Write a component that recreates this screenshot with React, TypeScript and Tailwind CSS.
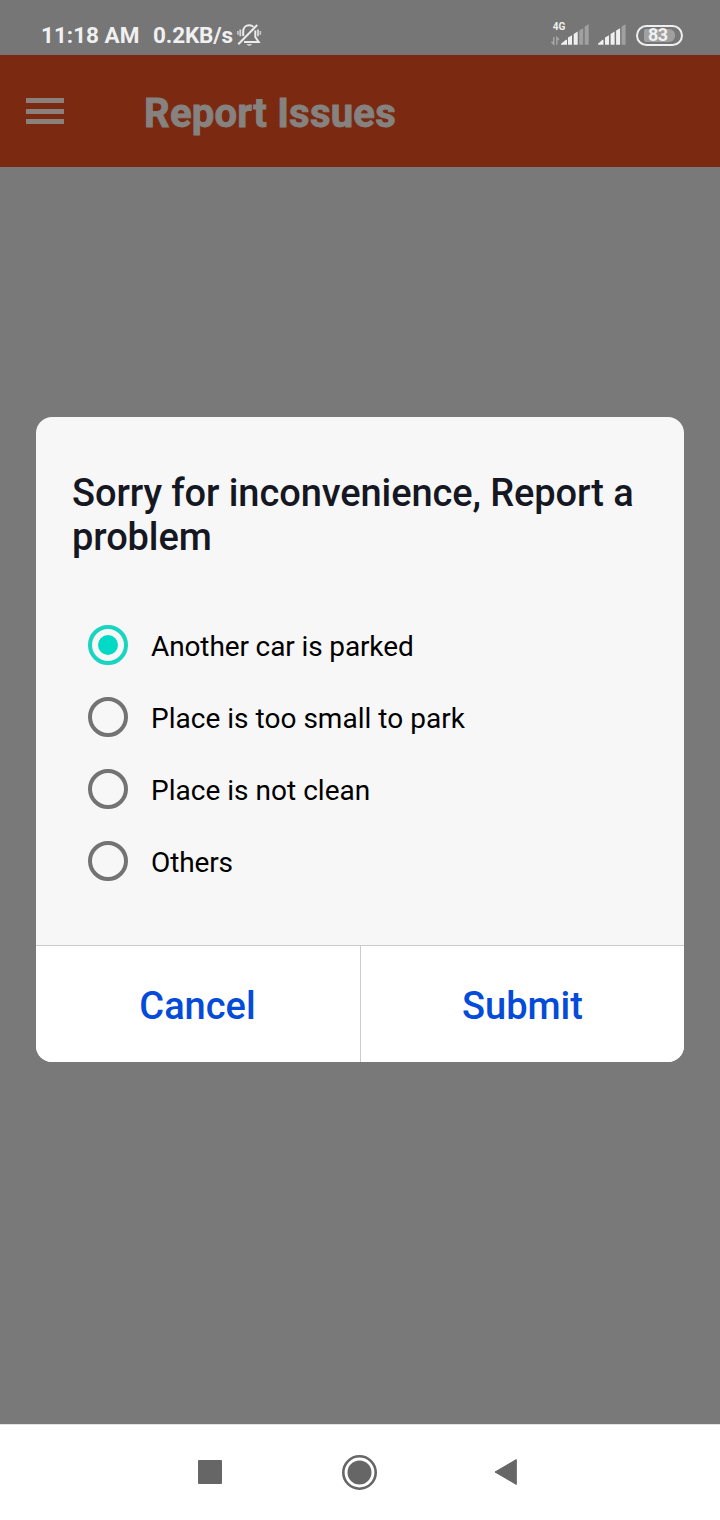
import React, { useState } from "react";

const options = ["Another car is parked", "Place is too small to park", "Place is not clean", "Others"];

function StatusBar() {
  return (
    <div className="flex h-[55px] items-center bg-[#767676] pt-[15px] pr-[37px] pl-[41px] text-[22.5px] font-bold text-[#f0f0f0]">
      <span className="w-[99px] pt-[2px] whitespace-nowrap">11:18 AM</span>
      <span className="ml-[13px] w-[80px] pt-[2px] tracking-[-0.15px] whitespace-nowrap">0.2KB/s</span>
      <svg className="ml-[3px] h-[26px] w-[26px]" viewBox="236 22 26 26" fill="none" stroke="#ececec" strokeWidth="2">
        <path d="M243.2 36v-4.5c0-3.8 2.6-6.3 6-6.3 1.7 0 3.2.6 4.2 1.7M255.3 30.5V37l3.4 5H244" />
        <path d="M238.3 44.2 257.2 25" />
        <path d="M246.5 44.3h5.6c-.8 1.9-4.8 1.9-5.6 0z" fill="#ececec" stroke="none" />
        <path d="M240.3 29.5v6.7M258 29.5v6.7" strokeWidth="1.9" opacity=".8" />
        <path d="M237.9 31v3.8M260.3 31v3.8" strokeWidth="1.6" opacity=".7" />
      </svg>
      <svg className="ml-auto h-[26px] w-[76px]" viewBox="550 22 76 26" fill="#efefef">
        <text x="552.8" y="30.2" fontSize="10" fontWeight="700" fontFamily="Roboto">4G</text>
        <path d="M553.7 37v7.2l-2.2-2.4M556.8 44.8v-7.2l2.2 2.4" fill="none" stroke="#a9a9a9" strokeWidth="1.4" />
        <path d="M561 44.7v-1l5-4h1v5zM568 37.5l4-2.3v9.5h-4zM573.7 34l4-2.5v13.2h-4z" />
        <path d="M579.2 30.5l4-2.3v16.5h-4zM584.7 26.6l4-2.3v20.4h-4z" fill="#a0a0a0" />
        <path d="M598 44.7v-1l4.5-4h1v5zM605 37.5l4-2.3v9.5h-4zM610.6 34l4-2.5v13.2h-4zM616.1 30.5l4-2.3v16.5h-4z" />
        <path d="M621.6 26.6l4-2.3v20.4h-4z" fill="#a0a0a0" />
      </svg>
      <span className="ml-[10px] flex h-[21px] w-[47px] items-center justify-center rounded-full border-2 border-[#efefef]">
        <span className="flex h-[13px] w-[31px] items-center rounded-[2px] rounded-r-[6px] bg-[#a0a0a0] pl-[4px] text-[18px] leading-none tracking-[-0.5px]">83</span>
      </span>
    </div>
  );
}

export default function App() {
  const [selected, setSelected] = useState(0);
  return (
    <div className="flex h-[1520px] w-[720px] flex-col bg-[#797979] font-['Roboto',sans-serif]">
      <StatusBar />
      <header className="flex h-[112px] items-center bg-[#7b2910] pl-[26px]">
        <button aria-label="Menu" className="flex w-[38px] flex-col gap-[5.5px]">
          <span className="h-[5px] bg-[#8a807c]" />
          <span className="h-[5px] bg-[#8a807c]" />
          <span className="h-[5px] bg-[#8a807c]" />
        </button>
        <h1 className="ml-[80px] pt-[6px] text-[40px] font-bold tracking-[0.25px] text-[#858280] [-webkit-text-stroke:0.9px_#858280]">Report Issues</h1>
      </header>
      <main className="flex-1 px-[36px] pt-[250px]">
        <section className="h-[645px] overflow-hidden rounded-[16px] bg-[#f7f7f7]">
          <div className="h-[528px] px-[36px] pt-[54px]">
            <h2 className="text-[38px] leading-[44px] font-medium tracking-[-0.09px] text-[#151722]">Sorry for inconvenience, Report a problem</h2>
            <div className="mt-[50px] pl-[16px]" role="radiogroup">
              {options.map((label, i) => (
                <button key={label} role="radio" aria-checked={selected === i} onClick={() => setSelected(i)} className="flex h-[72px] w-full items-center gap-[23px] text-[28px] text-black">
                  <span className={selected === i ? "flex size-[40px] items-center justify-center rounded-full border-4 border-[#18d5c2]" : "size-[40px] rounded-full border-4 border-[#737373]"}>
                    {selected === i && <span className="size-[20px] rounded-full bg-[#03dac5]" />}
                  </span>
                  <span className={i === 0 || i === 3 ? "pt-[4px] tracking-[-0.12px]" : "pt-[4px] tracking-[0.02px]"}>{label}</span>
                </button>
              ))}
            </div>
          </div>
          <div className="grid h-[117px] grid-cols-2 border-t border-[#ccc] bg-white text-[38px] font-medium text-[#054bd9]">
            <button className="pt-[4px] pr-[1px]">Cancel</button>
            <button className="border-l border-[#ccc] pt-[4px]">Submit</button>
          </div>
        </section>
      </main>
      <nav className="flex h-[96px] items-center border-t border-[#e2e2e2] bg-white pb-[1px] pl-[198px]">
        <span className="size-[24px] rounded-[1px] bg-[#666]" />
        <svg className="ml-[120px] size-[35px]" viewBox="0 0 35 35">
          <circle cx="17.5" cy="17.5" r="16.2" fill="none" stroke="#666" strokeWidth="2.6" />
          <circle cx="17.5" cy="17.5" r="12" fill="#666" />
        </svg>
        <svg className="ml-[117px] h-[26px] w-[23px]" viewBox="0 0 23 26" fill="#666" stroke="#666" strokeWidth="1" strokeLinejoin="round">
          <path d="M1 13 22.3.6v24.8z" />
        </svg>
      </nav>
    </div>
  );
}
